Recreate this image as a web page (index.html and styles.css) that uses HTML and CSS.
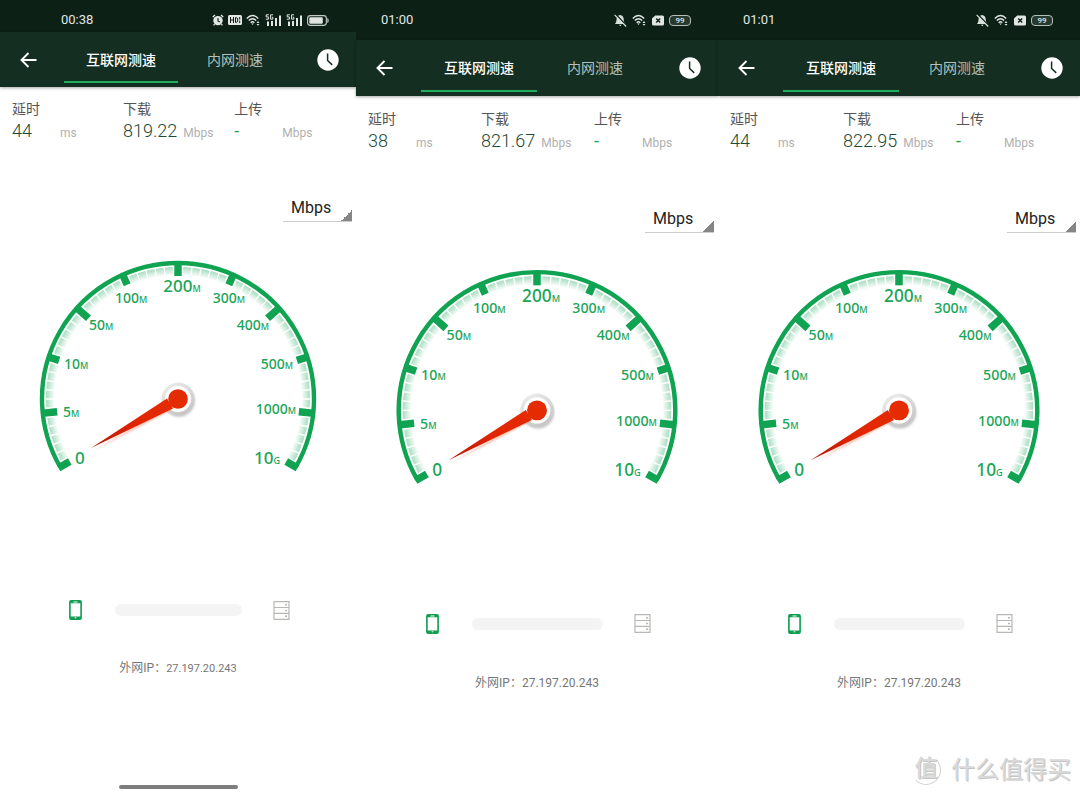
FILE: index.html
```html
<!DOCTYPE html>
<html lang="zh-CN">
<head>
<meta charset="utf-8">
<meta name="viewport" content="width=device-width, initial-scale=1">
<title>互联网测速</title>
<link rel="stylesheet" href="styles.css">
</head>
<body>
<svg class="defs" aria-hidden="true">
  <defs>
    <radialGradient id="band" gradientUnits="userSpaceOnUse" cx="0" cy="0" r="132">
      <stop offset="0.935" stop-color="#10a352" stop-opacity="0"/>
      <stop offset="1" stop-color="#10a352" stop-opacity="0.36"/>
    </radialGradient>
    <linearGradient id="hub" x1="0" y1="0" x2="0.6" y2="1">
      <stop offset="0" stop-color="#f0f0f0"/>
      <stop offset="1" stop-color="#c6c6c6"/>
    </linearGradient>
    <linearGradient id="needle" gradientUnits="userSpaceOnUse" x1="-87" y1="49" x2="0" y2="0">
      <stop offset="0" stop-color="#b81505"/>
      <stop offset="0.5" stop-color="#e02503"/>
      <stop offset="1" stop-color="#e62c02"/>
    </linearGradient>
    <filter id="soft" x="-20%" y="-20%" width="140%" height="140%"><feGaussianBlur stdDeviation="1.2"/></filter>
  </defs>
  <symbol id="dial" overflow="visible">
    <path d="M-110.85 64A128 128 0 1 1 110.85 64" pathLength="240" fill="none" stroke="url(#band)" stroke-width="8" stroke-dasharray="0 2.3 3.4 .6 3.4 .6 3.4 .6 3.4 .6 3.4 2.3"/>
    <path d="M-117.8 68A136 136 0 1 1 117.8 68" fill="none" stroke="#10a352" stroke-width="4.4"/>
    <g fill="#10a352">
      <rect x="125" y="-3.7" width="13" height="7.4" transform="rotate(150)"/>
      <rect x="121.5" y="-3.7" width="16" height="7.4" transform="rotate(174)"/>
      <rect x="125" y="-3.7" width="12" height="7.4" transform="rotate(198)"/>
      <rect x="120.5" y="-3.7" width="16" height="7.4" transform="rotate(222)"/>
      <rect x="125" y="-3.7" width="12" height="7.4" transform="rotate(246)"/>
      <rect x="123" y="-3.7" width="14" height="7.4" transform="rotate(270)"/>
      <rect x="125" y="-3.7" width="12" height="7.4" transform="rotate(294)"/>
      <rect x="120.5" y="-3.7" width="16" height="7.4" transform="rotate(318)"/>
      <rect x="125" y="-3.7" width="12" height="7.4" transform="rotate(342)"/>
      <rect x="121.5" y="-3.7" width="16" height="7.4" transform="rotate(6)"/>
      <rect x="125" y="-3.7" width="13" height="7.4" transform="rotate(30)"/>
    </g>
    <circle cx="1" cy="2" r="16" fill="#999" opacity=".5" filter="url(#soft)"/>
    <circle r="16.5" fill="url(#hub)"/>
    <circle r="13" fill="#fff"/>
    <path d="M-85 52L-7 11L-2 3Z" fill="#e62c02" opacity=".35" filter="url(#soft)"/>
    <path d="M-87 49L-11-.5L-5 9.5Z" fill="url(#needle)"/>
    <circle r="9.8" fill="#e52b02"/>
  </symbol>
  <symbol id="back" viewBox="0 0 17 16">
    <path d="M16.5 8H1.5M8.5 1L1.5 8l7 7" fill="none" stroke="#fff" stroke-width="1.9"/>
  </symbol>
  <symbol id="clock" viewBox="0 0 22 22">
    <circle cx="11" cy="11" r="10.7" fill="#fff"/>
    <path d="M10.6 4.5v7l4.6 4.4" fill="none" stroke="#142e21" stroke-width="1.5"/>
  </symbol>
  <symbol id="alarm" viewBox="0 0 12 12">
    <circle cx="6" cy="6.6" r="4.7" fill="#e2e7e4"/>
    <path d="M.8 3L3 1M11.2 3L9 1M2.6 10.2l-1 1.2M9.4 10.2l1 1.2" stroke="#e2e7e4" stroke-width="1.3"/>
    <path d="M6 4v3l1.8 1" fill="none" stroke="#0c2016" stroke-width="1.1"/>
  </symbol>
  <symbol id="hd" viewBox="0 0 14 10">
    <rect width="14" height="10" rx="1.5" fill="#e2e7e4"/>
    <path d="M2.5 2v6M5.500 2v6M2.500 5h3M7.500 2.600v4.800h.7q1.600 0 1.600-2.400T8.200 2.600zM11.700 2v2.500M11.700 5.700V8" fill="none" stroke="#0c2016" stroke-width="1"/>
  </symbol>
  <symbol id="wifi" viewBox="0 0 15 12">
    <path d="M.8 4.400Q6.500-1.200 12.200 4.400M2.800 6.600Q6.500 3 10.200 6.600M4.700 8.700Q6.500 7 8.300 8.700" fill="none" stroke="#e2e7e4" stroke-width="1.400"/>
    <path d="M5.300 9.600h2.400L6.500 11zM10.500 9l1.500-2 1.500 2zM10.500 10l1.500 1.800 1.500-1.800z" fill="#e2e7e4"/>
  </symbol>
  <symbol id="signal" viewBox="0 0 17 13">
    <path d="M3.800.8H1.200v2.100h2.200v2.300H.8M8 .8H5.600v4.400h2.200V3.200H6.800" fill="none" stroke="#e2e7e4" stroke-width="1"/>
    <path d="M2 7.500h2V12H2zM6 7h2v5H6zM10 4h2v8h-2zM14 1.500h2V12h-2z" fill="#e2e7e4"/>
  </symbol>
  <symbol id="battery" viewBox="0 0 22 11">
    <rect x=".6" y=".6" width="18.800" height="9.800" rx="2.800" fill="none" stroke="#c3cbc7" stroke-width="1.100"/>
    <rect x="2.300" y="2.300" width="13.500" height="6.400" rx="1.200" fill="#dfe4e1"/>
    <path d="M20.500 3.500q1.200 2 0 4" fill="none" stroke="#c3cbc7" stroke-width="1.200"/>
  </symbol>
  <symbol id="muted" viewBox="0 0 13 13">
    <path d="M6 1Q9.800 1.600 9.800 6q0 2.500 1.500 4H1Q2.500 8.500 2.500 6 2.500 1.800 6 1zM5 10.800h2.600l-1.300 1.400z" fill="#d9dfdc"/>
    <path d="M1.500 0L13 12" stroke="#0c2016" stroke-width="1.400"/>
    <path d="M.6.900L12.200 12.500" stroke="#d9dfdc" stroke-width="1.200"/>
  </symbol>
  <symbol id="nosim" viewBox="0 0 12 11">
    <path d="M3.200.5H10.500Q12 .5 12 2V9Q12 10.500 10.500 10.500H1.500Q0 10.500 0 9V3.500z" fill="#e2e7e4"/>
    <path d="M4.200 3.500l4 4M8.200 3.500l-4 4" stroke="#0c2016" stroke-width="1.400"/>
  </symbol>
  <symbol id="phone" viewBox="0 0 13 20">
    <rect x=".9" y=".9" width="11.200" height="18.200" rx="1.200" fill="#fff" stroke="#0f9d4f" stroke-width="1.600"/>
    <path d="M1 1h11v2.200H1zM1 16.500h11V19H1z" fill="#0f9d4f"/>
    <path d="M4.500 2h4M5.700 17.800h1.600" stroke="#fff" stroke-width="1"/>
  </symbol>
  <symbol id="server" viewBox="0 0 17 19">
    <path d="M1 .7h15v17.600H1zM1 6.500h15M1 12.400h15" fill="none" stroke="#b7b7b4" stroke-width="1.200"/>
    <path d="M12 3.700h2M12 9.500h2M12 15.300h2" stroke="#b7b7b4" stroke-width="1.500"/>
  </symbol>
</svg>

<main class="screens">
  <section class="screen screen-short">
    <div class="status">
      <span class="time">00:38</span>
      <span class="indicators">
        <svg width="12" height="12"><use href="#alarm"/></svg>
        <svg width="14" height="10"><use href="#hd"/></svg>
        <svg width="15" height="12"><use href="#wifi"/></svg>
        <svg width="17" height="13"><use href="#signal"/></svg>
        <svg width="17" height="13"><use href="#signal"/></svg>
        <svg width="22" height="11"><use href="#battery"/></svg>
      </span>
    </div>
    <header class="appbar">
      <button class="back" type="button" aria-label="返回"><svg width="17" height="16"><use href="#back"/></svg></button>
      <button class="tab tab-active" type="button">互联网测速</button>
      <button class="tab" type="button">内网测速</button>
      <button class="history" type="button" aria-label="历史"><svg width="22" height="22"><use href="#clock"/></svg></button>
    </header>
    <dl class="metrics">
      <div class="metric"><dt>延时</dt><dd><span class="value">44</span><span class="unit">ms</span></dd></div>
      <div class="metric"><dt>下载</dt><dd><span class="value">819.22</span><span class="unit">Mbps</span></dd></div>
      <div class="metric"><dt>上传</dt><dd><span class="value empty">-</span><span class="unit">Mbps</span></dd></div>
    </dl>
    <select class="unit-select" aria-label="单位"><option>Mbps</option></select>
    <svg class="gauge" viewBox="-178 -142 356 220">
      <use href="#dial"/>
      <g class="scale">
        <text class="big" x="-103" y="65">0</text>
        <text x="-115" y="18">5<tspan>M</tspan></text>
        <text x="-114" y="-30">10<tspan>M</tspan></text>
        <text x="-89" y="-69">50<tspan>M</tspan></text>
        <text x="-63" y="-96">100<tspan>M</tspan></text>
        <text class="big mid" x="4" y="-107">200<tspan>M</tspan></text>
        <text class="end" x="67" y="-96">300<tspan>M</tspan></text>
        <text class="end" x="91" y="-69">400<tspan>M</tspan></text>
        <text class="end" x="115" y="-30">500<tspan>M</tspan></text>
        <text class="end" x="118" y="15">1000<tspan>M</tspan></text>
        <text class="big end" x="102" y="65">10<tspan>G</tspan></text>
      </g>
    </svg>
    <div class="link">
      <svg width="13" height="20"><use href="#phone"/></svg>
      <div class="track"></div>
      <svg width="17" height="19"><use href="#server"/></svg>
    </div>
    <p class="ip">外网IP：<span class="address">27.197.20.243</span></p>
    <div class="handle"></div>
  </section>

  <section class="screen">
    <div class="status">
      <span class="time">01:00</span>
      <span class="indicators">
        <svg width="13" height="13"><use href="#muted"/></svg>
        <svg width="15" height="12"><use href="#wifi"/></svg>
        <svg width="12" height="11"><use href="#nosim"/></svg>
        <span class="charge">99</span>
      </span>
    </div>
    <header class="appbar">
      <button class="back" type="button" aria-label="返回"><svg width="17" height="16"><use href="#back"/></svg></button>
      <button class="tab tab-active" type="button">互联网测速</button>
      <button class="tab" type="button">内网测速</button>
      <button class="history" type="button" aria-label="历史"><svg width="22" height="22"><use href="#clock"/></svg></button>
    </header>
    <dl class="metrics">
      <div class="metric"><dt>延时</dt><dd><span class="value">38</span><span class="unit">ms</span></dd></div>
      <div class="metric"><dt>下载</dt><dd><span class="value">821.67</span><span class="unit">Mbps</span></dd></div>
      <div class="metric"><dt>上传</dt><dd><span class="value empty">-</span><span class="unit">Mbps</span></dd></div>
    </dl>
    <select class="unit-select" aria-label="单位"><option>Mbps</option></select>
    <svg class="gauge" viewBox="-178 -142 356 220">
      <use href="#dial"/>
      <g class="scale">
        <text class="big" x="-103" y="65">0</text>
        <text x="-115" y="18">5<tspan>M</tspan></text>
        <text x="-114" y="-30">10<tspan>M</tspan></text>
        <text x="-89" y="-69">50<tspan>M</tspan></text>
        <text x="-63" y="-96">100<tspan>M</tspan></text>
        <text class="big mid" x="4" y="-107">200<tspan>M</tspan></text>
        <text class="end" x="67" y="-96">300<tspan>M</tspan></text>
        <text class="end" x="91" y="-69">400<tspan>M</tspan></text>
        <text class="end" x="115" y="-30">500<tspan>M</tspan></text>
        <text class="end" x="118" y="15">1000<tspan>M</tspan></text>
        <text class="big end" x="102" y="65">10<tspan>G</tspan></text>
      </g>
    </svg>
    <div class="link">
      <svg width="13" height="20"><use href="#phone"/></svg>
      <div class="track"></div>
      <svg width="17" height="19"><use href="#server"/></svg>
    </div>
    <p class="ip">外网IP：<span class="address">27.197.20.243</span></p>
  </section>

  <section class="screen">
    <div class="status">
      <span class="time">01:01</span>
      <span class="indicators">
        <svg width="13" height="13"><use href="#muted"/></svg>
        <svg width="15" height="12"><use href="#wifi"/></svg>
        <svg width="12" height="11"><use href="#nosim"/></svg>
        <span class="charge">99</span>
      </span>
    </div>
    <header class="appbar">
      <button class="back" type="button" aria-label="返回"><svg width="17" height="16"><use href="#back"/></svg></button>
      <button class="tab tab-active" type="button">互联网测速</button>
      <button class="tab" type="button">内网测速</button>
      <button class="history" type="button" aria-label="历史"><svg width="22" height="22"><use href="#clock"/></svg></button>
    </header>
    <dl class="metrics">
      <div class="metric"><dt>延时</dt><dd><span class="value">44</span><span class="unit">ms</span></dd></div>
      <div class="metric"><dt>下载</dt><dd><span class="value">822.95</span><span class="unit">Mbps</span></dd></div>
      <div class="metric"><dt>上传</dt><dd><span class="value empty">-</span><span class="unit">Mbps</span></dd></div>
    </dl>
    <select class="unit-select" aria-label="单位"><option>Mbps</option></select>
    <svg class="gauge" viewBox="-178 -142 356 220">
      <use href="#dial"/>
      <g class="scale">
        <text class="big" x="-103" y="65">0</text>
        <text x="-115" y="18">5<tspan>M</tspan></text>
        <text x="-114" y="-30">10<tspan>M</tspan></text>
        <text x="-89" y="-69">50<tspan>M</tspan></text>
        <text x="-63" y="-96">100<tspan>M</tspan></text>
        <text class="big mid" x="4" y="-107">200<tspan>M</tspan></text>
        <text class="end" x="67" y="-96">300<tspan>M</tspan></text>
        <text class="end" x="91" y="-69">400<tspan>M</tspan></text>
        <text class="end" x="115" y="-30">500<tspan>M</tspan></text>
        <text class="end" x="118" y="15">1000<tspan>M</tspan></text>
        <text class="big end" x="102" y="65">10<tspan>G</tspan></text>
      </g>
    </svg>
    <div class="link">
      <svg width="13" height="20"><use href="#phone"/></svg>
      <div class="track"></div>
      <svg width="17" height="19"><use href="#server"/></svg>
    </div>
    <p class="ip">外网IP：<span class="address">27.197.20.243</span></p>
  </section>

  <div class="watermark"><span class="seal">值</span><span>什么值得买</span></div>
</main>
</body>
</html>
```
FILE: styles.css
```css
* {
  box-sizing: border-box;
}

body {
  margin: 0;
  background: #fff;
  font-family: Roboto, "Noto Sans CJK SC", sans-serif;
}

button,
select {
  margin: 0;
  padding: 0;
  border: 0;
  border-radius: 0;
  background: none;
  font: inherit;
}

svg {
  display: block;
  flex: none;
}

.defs {
  position: absolute;
  width: 0;
  height: 0;
}

.screens {
  position: relative;
  display: grid;
  grid-template-columns: 356fr 362fr 362fr;
  min-height: 100vh;
}

.screen {
  display: flex;
  flex-direction: column;
  min-width: 0;
  background: #fff;
}

.status {
  display: flex;
  justify-content: space-between;
  height: 40px;
  padding: 10px 27px 0 25px;
  background: #0c2016;
  color: #e2e7e4;
  font-size: 13px;
  line-height: 20px;
}

.indicators {
  display: flex;
  align-items: center;
  gap: 5px;
  height: 20px;
}

.charge {
  width: 22px;
  height: 11px;
  border: 1px solid #b4beb9;
  border-radius: 4px;
  background: #263a30;
  font-size: 8px;
  font-weight: 500;
  line-height: 9px;
  text-align: center;
}

.appbar {
  display: grid;
  grid-template-columns: 18fr 32fr 32fr 18fr;
  height: 56px;
  background: #142e21;
  box-shadow: 0 1px 3px rgba(0, 0, 0, 0.35);
}

.back,
.history {
  display: flex;
  align-items: center;
}

.back {
  padding-left: 20px;
}

.history {
  justify-content: flex-end;
  padding-right: 17px;
}

.tab {
  height: 52px;
  padding-top: 4px;
  border-bottom: 2px solid transparent;
  color: #b5c0ba;
  font-size: 14px;
}

.tab-active {
  border-bottom-color: #1fae60;
  color: #fff;
  font-weight: 500;
}

.metrics {
  display: grid;
  grid-template-columns: repeat(3, 32.3%);
  margin: 0;
  padding: 13px 0 0 12px;
}

.metric dt {
  color: #555;
  font-size: 14px;
  line-height: 20px;
}

.metric dd {
  display: flex;
  align-items: baseline;
  gap: 6px;
  margin: 0;
  line-height: 24px;
}

.value {
  min-width: 42px;
  color: #1d4a35;
  font-size: 18px;
  font-weight: 300;
}

.value.empty {
  color: #1fa55b;
  font-weight: 400;
}

.unit {
  color: #b0b0b0;
  font-size: 12px;
}

.unit-select {
  align-self: flex-end;
  width: 69px;
  height: 28px;
  margin: 50px 4px 0 0;
  padding-left: 8px;
  border-bottom: 1px solid #ccc;
  appearance: none;
  background: linear-gradient(135deg, transparent 50%, #868686 50%) no-repeat right bottom / 12px 12px;
  background-origin: border-box;
  background-clip: border-box;
  color: #222;
  font-size: 16px;
}

.gauge {
  width: 100%;
  height: auto;
  margin-top: 33px;
  overflow: visible;
}

.scale {
  fill: #1aa557;
  font-family: "Noto Sans", sans-serif;
  font-size: 14px;
  font-weight: 500;
}

.scale tspan {
  font-size: 9px;
}

.big {
  font-size: 17px;
}

.mid {
  text-anchor: middle;
}

.end {
  text-anchor: end;
}

.link {
  display: flex;
  align-items: center;
  margin-top: 124px;
  padding: 0 18.5% 0 19.4%;
}

.track {
  flex: 1;
  height: 12px;
  margin: 0 31px 0 33px;
  border-radius: 6px;
  background: #f4f4f4;
}

.ip {
  margin: 39px 0 0;
  color: #777;
  font-size: 12px;
  line-height: 20px;
  text-align: center;
}

.handle {
  width: 119px;
  height: 4px;
  margin: auto auto 7px;
  border-radius: 2px;
  background: #7d7d7d;
}

.screen-short .status {
  height: 32px;
  padding-left: 61px;
}

.screen-short .indicators {
  gap: 4px;
}

.screen-short .appbar {
  height: 55px;
}

.screen-short .tab {
  height: 51px;
}

.screen-short .metrics {
  padding-top: 12px;
}

.screen-short .unit-select {
  margin-top: 49px;
}

.screen-short .gauge {
  margin-top: 35px;
}

.screen-short .link {
  margin-top: 123px;
}

.screen-short .ip {
  margin-top: 38px;
}

.screen-short .address {
  font-size: 11px;
}

.watermark {
  position: absolute;
  right: 9px;
  bottom: 10px;
  display: flex;
  align-items: center;
  gap: 10px;
  color: #dadada;
  font-size: 24px;
  line-height: 32px;
  text-shadow: 1px 1px 0 #c4c4c4;
}

.seal {
  width: 30px;
  height: 30px;
  border: 1px solid #d0d0d0;
  border-top-color: transparent;
  border-left-color: transparent;
  border-radius: 50%;
  font-size: 23px;
  font-weight: 500;
  line-height: 26px;
  text-align: center;
}
```
